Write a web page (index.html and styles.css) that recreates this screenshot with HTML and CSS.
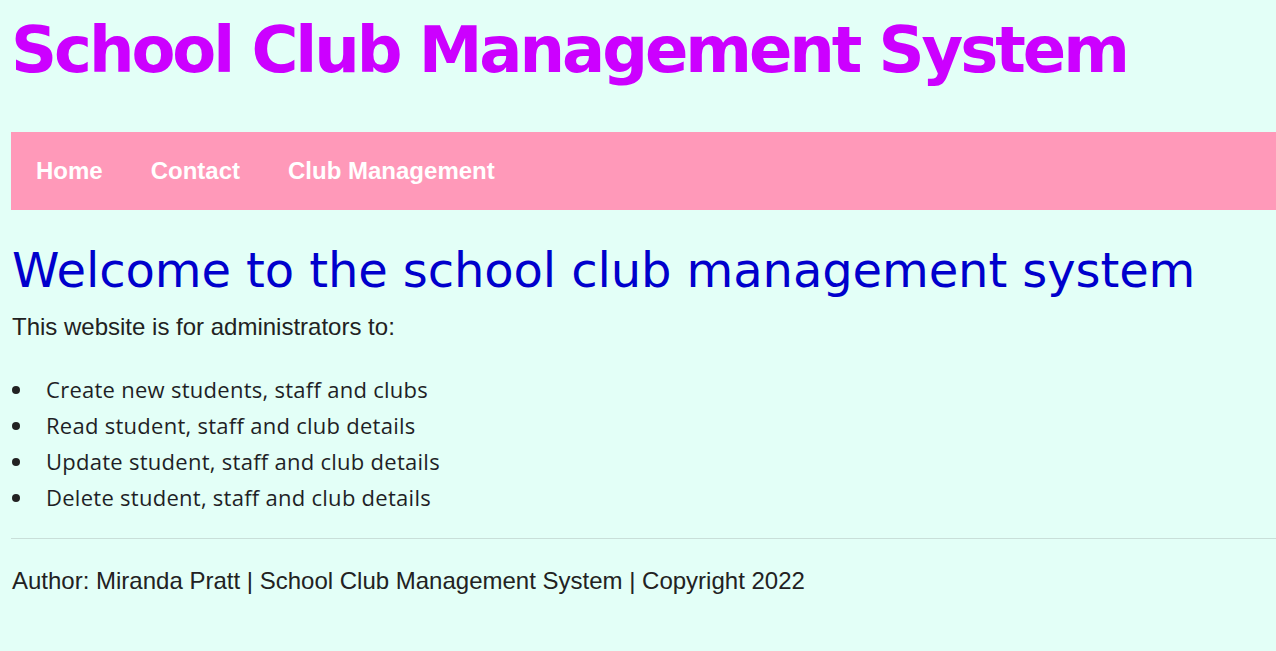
FILE: index.html
```html
<!DOCTYPE html>
<html lang="en">
<head>
<meta charset="utf-8">
<title>School Club Management System</title>
<link rel="stylesheet" href="styles.css">
</head>
<body>
<header class="site-header">
  <h1 class="site-title">School Club Management System</h1>
  <nav class="main-nav">
    <a class="nav-link" href="#">Home</a>
    <a class="nav-link" href="#">Contact</a>
    <a class="nav-link" href="#">Club Management</a>
  </nav>
</header>
<main class="content">
  <h2 class="welcome">Welcome to the school club management system</h2>
  <p class="intro">This website is for administrators to:</p>
  <ul class="task-list">
    <li class="task">Create new students, staff and clubs</li>
    <li class="task">Read student, staff and club details</li>
    <li class="task">Update student, staff and club details</li>
    <li class="task">Delete student, staff and club details</li>
  </ul>
</main>
<footer class="site-footer">
  <hr class="divider">
  <p class="footer-text">Author: Miranda Pratt | School Club Management System | Copyright 2022</p>
</footer>
</body>
</html>
```

FILE: styles.css
```css
html, body {
  margin: 0;
  padding: 0;
}

body {
  background: #e3fff7;
  padding-left: 11px;
  color: #222222;
  font-family: "Liberation Sans", Arial, sans-serif;
  overflow: hidden;
}

.site-title {
  margin: 12px 0 0 0;
  font-family: "DejaVu Sans", Verdana, sans-serif;
  font-weight: bold;
  font-size: 64px;
  line-height: 76px;
  letter-spacing: -3.05px;
  color: #cc00ff;
  white-space: nowrap;
}

.main-nav {
  margin-top: 44px;
  height: 78px;
  background: #ff99b9;
  display: flex;
  align-items: center;
  padding-left: 1px;
}

.nav-link {
  padding: 0 24px;
  font-family: "Liberation Sans", Arial, sans-serif;
  font-weight: bold;
  font-size: 24px;
  color: #ffffff;
  text-decoration: none;
}

.welcome {
  margin: 32px 0 0 1px;
  font-family: "DejaVu Sans", Verdana, sans-serif;
  font-weight: normal;
  font-size: 48px;
  line-height: 56px;
  letter-spacing: -0.1px;
  color: #0000cc;
  white-space: nowrap;
}

.intro {
  margin: 15px 0 0 1px;
  font-size: 24px;
  line-height: 28px;
}

.task-list {
  margin: 30px 0 0 0;
  padding-left: 0;
  list-style: none;
  font-family: "Open Sans", sans-serif;
  font-size: 22px;
  line-height: 36px;
  letter-spacing: 0.27px;
  color: #1f1f26;
}

.task {
  display: flex;
  align-items: center;
}

.task::before {
  content: "";
  flex: none;
  width: 8px;
  height: 8px;
  border-radius: 50%;
  background: #222222;
  margin: 1px 26px 0 1px;
}

.divider {
  margin: 23px 0 0 0;
  border: 0;
  border-top: 1px solid #c9dfd9;
  height: 0;
}

.footer-text {
  margin: 28px 0 0 1px;
  font-size: 24px;
  line-height: 28px;
}
```
